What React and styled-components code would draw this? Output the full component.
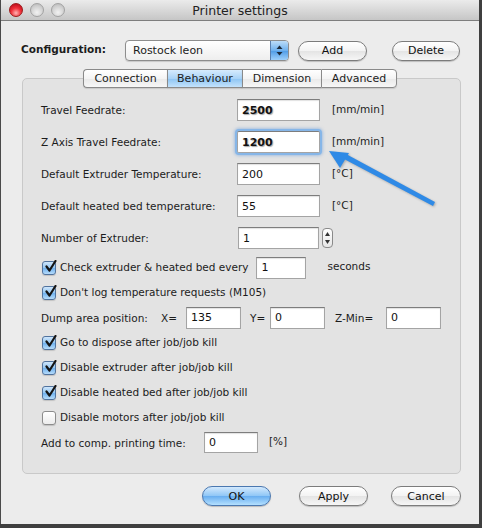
import styled, { createGlobalStyle } from "styled-components";

const GlobalStyle = createGlobalStyle`
  html, body {
    margin: 0;
    padding: 0;
    background: #3f3f3f;
  }
  body {
    font-family: "DejaVu Sans", "Liberation Sans", sans-serif;
    font-size: 10.5px;
    color: #1c1c1c;
  }
`;

const fields = [
  { label: "Travel Feedrate:", value: "2500", unit: "[mm/min]", bold: true },
  { label: "Z Axis Travel Feedrate:", value: "1200", unit: "[mm/min]", bold: true, focus: true },
  { label: "Default Extruder Temperature:", value: "200", unit: "[°C]" },
  { label: "Default heated bed temperature:", value: "55", unit: "[°C]" },
];

const killOptions = [
  { label: "Go to dispose after job/job kill", checked: true },
  { label: "Disable extruder after job/job kill", checked: true },
  { label: "Disable heated bed after job/job kill", checked: true },
  { label: "Disable motors after job/job kill", checked: false },
];

export default function App() {
  return (
    <>
      <GlobalStyle />
      <Window>
        <TitleBar>
          <Lights>
            <Light $red />
            <Light />
            <Light />
          </Lights>
          <Title>Printer settings</Title>
          <span />
        </TitleBar>

        <Content>
          <ConfigRow>
            <ConfigLabel>Configuration:</ConfigLabel>
            <Select>
              <span>Rostock leon</span>
              <SelectStepper>
                <svg width="7" height="11" viewBox="0 0 7 11">
                  <path d="M3.5 0.5 L6.5 4 L0.5 4 Z" fill="#1d2a3a" />
                  <path d="M3.5 10.5 L6.5 7 L0.5 7 Z" fill="#1d2a3a" />
                </svg>
              </SelectStepper>
            </Select>
            <PillButton $w={69} $ml={9}>Add</PillButton>
            <PillButton $w={68} $ml={25}>Delete</PillButton>
          </ConfigRow>

          <Tabs>
            <Tab $w={84} $first>Connection</Tab>
            <Tab $w={75} $active>Behaviour</Tab>
            <Tab $w={79}>Dimension</Tab>
            <Tab $w={76} $last>Advanced</Tab>
          </Tabs>

          <Panel>
            {fields.map((f, i) => (
              <FieldRow key={f.label} $mt={i === 0 ? 0 : 10}>
                <FieldLabel $w={196}>{f.label}</FieldLabel>
                <TextBox $w={83} $focus={f.focus} $bold={f.bold}>
                  {f.value}
                </TextBox>
                <Unit $ml={12}>{f.unit}</Unit>
              </FieldRow>
            ))}
            <FieldRow $mt={10}>
              <FieldLabel $w={197}>Number of Extruder:</FieldLabel>
              <TextBox $w={81}>1</TextBox>
              <Stepper>
                <svg width="7" height="16" viewBox="0 0 7 16">
                  <path d="M3.5 2 L6 6 L1 6 Z" fill="#333" />
                  <path d="M3.5 14 L6 10 L1 10 Z" fill="#333" />
                </svg>
              </Stepper>
            </FieldRow>

            <CheckRow $mt={6}>
              <CheckBox checked />
              <CheckText>Check extruder &amp; heated bed every</CheckText>
              <TextBox $w={50} $ml={8}>1</TextBox>
              <Unit $ml={21}>seconds</Unit>
            </CheckRow>
            <CheckRow>
              <CheckBox checked />
              <CheckText>Don't log temperature requests (M105)</CheckText>
            </CheckRow>
            <CheckRow>
              <FieldLabel $w={120}>Dump area position:</FieldLabel>
              <FieldLabel $w={25}>X=</FieldLabel>
              <TextBox $w={55}>135</TextBox>
              <FieldLabel $w={20} $ml={9}>Y=</FieldLabel>
              <TextBox $w={55}>0</TextBox>
              <FieldLabel $w={51} $ml={10}>Z-Min=</FieldLabel>
              <TextBox $w={55}>0</TextBox>
            </CheckRow>
            {killOptions.map((o) => (
              <CheckRow key={o.label}>
                <CheckBox checked={o.checked} />
                <CheckText>{o.label}</CheckText>
              </CheckRow>
            ))}
            <CheckRow>
              <FieldLabel $w={163}>Add to comp. printing time:</FieldLabel>
              <TextBox $w={54} $h={21}>0</TextBox>
              <Unit $ml={11}>[%]</Unit>
            </CheckRow>

            <Arrow width="130" height="70" viewBox="0 0 130 70">
              <path d="M23 10 L112 58 L110 62 L21 15 Z" fill="#2f8ae6" />
              <path d="M6 7 L26 9 L17 24 Z" fill="#2f8ae6" />
            </Arrow>
          </Panel>

          <ButtonRow>
            <PillButton $w={69} $primary>OK</PillButton>
            <PillButton $w={69} $ml={28}>Apply</PillButton>
            <PillButton $w={70} $ml={23}>Cancel</PillButton>
          </ButtonRow>
        </Content>
      </Window>
    </>
  );
}

function CheckBox({ checked }) {
  return (
    <Box $checked={checked}>
      {checked && (
        <svg width="13" height="13" viewBox="0 0 13 13">
          <path
            d="M2.5 6.5 L5.5 10.5 L11.5 1"
            fill="none"
            stroke="#141414"
            strokeWidth="2.2"
            strokeLinecap="round"
            strokeLinejoin="round"
          />
        </svg>
      )}
    </Box>
  );
}

const Window = styled.div`
  width: 478px;
  height: 524px;
  background: #ececec;
  border-left: 1px solid #4a4a4a;
  display: flex;
  flex-direction: column;
`;

const TitleBar = styled.div`
  height: 20px;
  display: grid;
  grid-template-columns: 1fr auto 1fr;
  align-items: center;
  background: linear-gradient(#ebebeb, #c6c6c6);
  border-bottom: 1px solid #7e7e7e;
`;

const Lights = styled.div`
  display: flex;
  gap: 7px;
  padding-left: 8px;
`;

const Light = styled.span`
  width: 14px;
  height: 14px;
  border-radius: 50%;
  box-sizing: border-box;
  border: 1px solid ${(p) => (p.$red ? "#9c1a1a" : "#a2a2a2")};
  background: ${(p) =>
    p.$red
      ? "radial-gradient(circle at 50% 75%, #ffb3b3 0%, #f0303a 45%, #b00010 100%)"
      : "radial-gradient(circle at 50% 70%, #f2f2f2 0%, #d2d2d2 55%, #b4b4b4 100%)"};
`;

const Title = styled.div`
  font-family: "DejaVu Sans", sans-serif;
  font-size: 12.5px;
  color: #222;
`;

const Content = styled.div`
  padding: 0 18px 0 21px;
  display: flex;
  flex-direction: column;
`;

const ConfigRow = styled.div`
  display: flex;
  align-items: center;
  height: 21px;
  margin-top: 19px;
`;

const ConfigLabel = styled.div`
  width: 104px;
  font-weight: bold;
  margin-left: -1px;
  margin-top: -4px;
`;

const Select = styled.div`
  width: 164px;
  height: 21px;
  box-sizing: border-box;
  border: 1px solid #8d8d8d;
  border-radius: 4px;
  background: linear-gradient(#ffffff, #eeeeee);
  display: flex;
  align-items: center;
  justify-content: space-between;
  padding-left: 7px;
  font-size: 11px;
  overflow: hidden;
  box-shadow: 0 1px 1px rgba(0, 0, 0, 0.15);
`;

const SelectStepper = styled.div`
  width: 17px;
  height: 100%;
  border-left: 1px solid #5a7fae;
  background: linear-gradient(#bcdcf8, #6fb1ee 50%, #4d9ae5 51%, #9ed0fb);
  display: flex;
  align-items: center;
  justify-content: center;
`;

const PillButton = styled.div`
  width: ${(p) => p.$w}px;
  height: 20px;
  margin-left: ${(p) => p.$ml || 0}px;
  box-sizing: border-box;
  border-radius: 10px;
  border: 1px solid ${(p) => (p.$primary ? "#4b78b0" : "#7c7c7c")};
  background: ${(p) =>
    p.$primary
      ? "linear-gradient(#d3e9fd, #8ec6f6 50%, #68aef0 51%, #b4e0ff)"
      : "linear-gradient(#ffffff, #f3f3f3 50%, #e4e4e4 51%, #f6f6f6)"};
  box-shadow: 0 1px 1px rgba(0, 0, 0, 0.2);
  display: flex;
  align-items: center;
  justify-content: center;
  font-size: 11px;
  color: #111;
`;

const Tabs = styled.div`
  display: flex;
  justify-content: center;
  margin-top: 8px;
  position: relative;
  z-index: 1;
  padding-right: 3px;
`;

const Tab = styled.div`
  width: ${(p) => p.$w}px;
  height: 19px;
  box-sizing: border-box;
  border: 1px solid #8a8a8a;
  border-right: ${(p) => (p.$last ? "1px solid #8a8a8a" : "none")};
  border-radius: ${(p) => (p.$first ? "4px 0 0 4px" : p.$last ? "0 4px 4px 0" : "0")};
  background: ${(p) =>
    p.$active
      ? "linear-gradient(#d6ebfd, #a9d3f7 50%, #8cc4f3 51%, #c4e3fc)"
      : "linear-gradient(#ffffff, #f4f4f4 50%, #e9e9e9 51%, #f7f7f7)"};
  display: flex;
  align-items: center;
  justify-content: center;
  font-size: 11px;
  box-shadow: 0 1px 1px rgba(0, 0, 0, 0.12);
`;

const Panel = styled.div`
  position: relative;
  margin-top: -10px;
  height: 396px;
  box-sizing: border-box;
  background: #e3e3e3;
  border: 1px solid #c9c9c9;
  border-radius: 5px;
  padding: 20px 0 0 18px;
  display: flex;
  flex-direction: column;
`;

const FieldRow = styled.div`
  display: flex;
  align-items: center;
  height: 22px;
  margin-top: ${(p) => p.$mt || 0}px;
`;

const CheckRow = styled.div`
  display: flex;
  align-items: center;
  height: 25px;
  margin-top: ${(p) => p.$mt || 0}px;
`;

const FieldLabel = styled.span`
  width: ${(p) => p.$w}px;
  margin-left: ${(p) => p.$ml || 0}px;
  flex-shrink: 0;
  white-space: nowrap;
`;

const Unit = styled.span`
  margin-left: ${(p) => p.$ml || 0}px;
  margin-top: -3px;
`;

const TextBox = styled.div`
  width: ${(p) => p.$w}px;
  height: ${(p) => p.$h || 22}px;
  margin-left: ${(p) => p.$ml || 0}px;
  box-sizing: border-box;
  flex-shrink: 0;
  background: #fff;
  border: 1px solid #a4a4a4;
  border-top-color: #7d7d7d;
  box-shadow: ${(p) =>
    p.$focus
      ? "0 0 0 2px #86b6e8, 0 0 3px 3px rgba(110, 160, 220, 0.5)"
      : "inset 0 1px 1px rgba(0, 0, 0, 0.12)"};
  border-radius: ${(p) => (p.$focus ? "2px" : "0")};
  padding-left: 4px;
  display: flex;
  align-items: center;
  font-size: 11px;
  font-weight: ${(p) => (p.$bold ? "bold" : "normal")};
  text-shadow: ${(p) => (p.$bold ? "1px 1px 1px rgba(0,0,0,0.35)" : "none")};
  color: #111;
`;

const Stepper = styled.div`
  width: 11px;
  height: 20px;
  margin-left: 3px;
  box-sizing: border-box;
  border: 1px solid #8a8a8a;
  border-radius: 4px;
  background: linear-gradient(#fff, #e6e6e6);
  display: flex;
  align-items: center;
  justify-content: center;
`;

const Box = styled.span`
  width: 14px;
  height: 14px;
  margin-left: 1px;
  box-sizing: border-box;
  border-radius: 3px;
  border: 1px solid ${(p) => (p.$checked ? "#51739e" : "#8c8c8c")};
  background: ${(p) =>
    p.$checked
      ? "linear-gradient(#cfe6fb, #92c6f4 50%, #6eb0ee 51%, #b6dcfb)"
      : "linear-gradient(#ffffff, #ececec)"};
  box-shadow: 0 1px 1px rgba(0, 0, 0, 0.15);
  display: flex;
  align-items: center;
  justify-content: center;
  position: relative;
  svg {
    position: absolute;
    top: -2px;
    left: 1px;
  }
`;

const CheckText = styled.span`
  margin-left: 4px;
  white-space: nowrap;
  margin-top: -2px;
`;

const Arrow = styled.svg`
  position: absolute;
  left: 300px;
  top: 65px;
  filter: drop-shadow(1px 1px 1px rgba(0, 0, 0, 0.25));
`;

const ButtonRow = styled.div`
  display: flex;
  margin-top: 12px;
  padding-left: 180px;
`;
